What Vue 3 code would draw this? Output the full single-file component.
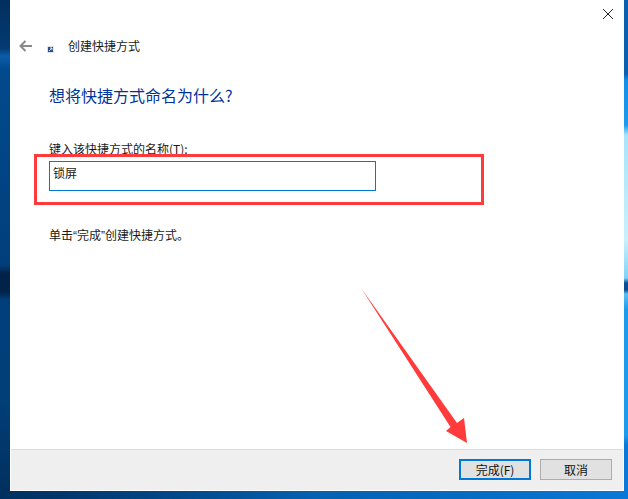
<script setup>
const title = '创建快捷方式'
const heading = '想将快捷方式命名为什么?'
const label = '键入该快捷方式的名称(T):'
const name = '锁屏'
const hint = '单击“完成”创建快捷方式。'
</script>

<template>
  <div class="desktop">
    <div class="window">
      <div class="close-row">
        <svg class="close" width="12" height="12" viewBox="0 0 12 12">
          <path d="M1 1 L11 11 M11 1 L1 11" stroke="#222" stroke-width="1" fill="none" />
        </svg>
      </div>
      <div class="title-row">
        <svg class="back" width="13" height="12" viewBox="0 0 13 12">
          <path d="M13 6 H2 M6.500 1 L1.500 6 L6.500 11" stroke="#8a8a8a" stroke-width="2" fill="none" />
        </svg>
        <svg class="shortcut" width="7" height="7" viewBox="0 0 7 7">
          <rect width="7" height="7" fill="#dfe3e8" />
          <rect x="1" y="1" width="5" height="5" fill="#2b4f86" />
          <path d="M2 5 L5 2 M3 2 H5 V4" stroke="#fff" stroke-width="0.800" fill="none" />
        </svg>
        <span class="title">{{ title }}</span>
      </div>
      <h1 class="heading">{{ heading }}</h1>
      <label class="label">{{ label }}</label>
      <div class="input">{{ name }}</div>
      <p class="hint">{{ hint }}</p>
      <div class="footer">
        <button class="btn primary">完成(F)</button>
        <button class="btn">取消</button>
      </div>
    </div>
    <div class="red-box"></div>
    <svg class="arrow" width="628" height="499" viewBox="0 0 628 499">
      <polygon points="361,288 457,423 464,418 467,443 446,431 450.500,427" fill="#ff3b3b" />
    </svg>
  </div>
</template>

<style scoped>
.desktop {
  position: relative;
  width: 628px;
  height: 499px;
  overflow: hidden;
  background-color: #013a70;
  background-image:
    linear-gradient(90deg, #01305f 0, #01366c 60px, #024c90 200px, #0560b0 310px, #0468bd 420px, #0a78d8 628px),
    linear-gradient(180deg, #0a5fb0 0, #0a5fb0 74px, #0f8fe8 80px, #1a9bee 125px, #a8e4fb 135px, #c9f0fd 240px, #7fd3f7 278px, #0a4f96 283px, #0a4f96 290px, #5cc0f3 294px, #1a9bee 310px, #1a9bee 435px, #0a78d8 445px, #0a78d8 499px),
    linear-gradient(180deg, #02305e 0, #023a72 48px, #0a5ca8 56px, #024a8c 70px, #013f7c 265px, #01234a 273px, #01234a 292px, #013f7c 300px, #013f78 400px, #012f5c 499px);
  background-repeat: no-repeat;
  background-size: 100% 8px, 4px 499px, 10px 499px;
  background-position: left bottom, right top, left top;
  font-family: "Noto Sans CJK SC", "Liberation Sans", sans-serif;
}
.window {
  display: flex;
  flex-direction: column;
  margin-left: 10px;
  width: 614px;
  height: 491px;
  box-sizing: border-box;
  background: #fff;
  color: #1a1a1a;
}
.close-row {
  display: flex;
  justify-content: flex-end;
  padding: 8px 10px 0 0;
  height: 12px;
}
.title-row {
  display: flex;
  align-items: center;
  height: 18px;
  margin-top: 17px;
  padding-left: 9px;
}
.shortcut {
  margin: 7px 0 0 15px;
}
.title {
  margin-left: 14px;
  font-size: 12px;
  line-height: 18px;
}
.heading {
  margin: 28px 0 0 39px;
  font-size: 16px;
  font-weight: 400;
  line-height: 24px;
  color: #003399;
}
.label {
  margin: 33px 0 0 39px;
  font-size: 12px;
  line-height: 18px;
}
.input {
  margin: 3px 0 0 39px;
  width: 327px;
  height: 30px;
  box-sizing: border-box;
  border: 1px solid #0078d7;
  padding: 2px 0 0 3px;
  font-size: 12px;
  line-height: 18px;
}
.hint {
  margin: 36px 0 0 39px;
  font-family: "Liberation Sans", "Noto Sans CJK SC", sans-serif;
  font-size: 12px;
  line-height: 18px;
}
.footer {
  display: flex;
  justify-content: flex-end;
  align-items: flex-start;
  gap: 9px;
  margin: auto 1px 1px;
  height: 41px;
  box-sizing: border-box;
  padding: 9px 11px 0 0;
  border-top: 1px solid #dcdcdc;
  background: #efefef;
}
.btn {
  width: 72px;
  height: 21px;
  padding: 0;
  box-sizing: border-box;
  border: 1px solid #adadad;
  background: #e1e1e1;
  color: #111;
  font-family: inherit;
  font-size: 12px;
  line-height: 17px;
}
.primary {
  border: 2px solid #0078d7;
  line-height: 15px;
}
.red-box {
  position: absolute;
  left: 34px;
  top: 154px;
  width: 450px;
  height: 51px;
  box-sizing: border-box;
  border: 3px solid #ff3b3b;
}
.arrow {
  position: absolute;
  left: 0;
  top: 0;
}
</style>
